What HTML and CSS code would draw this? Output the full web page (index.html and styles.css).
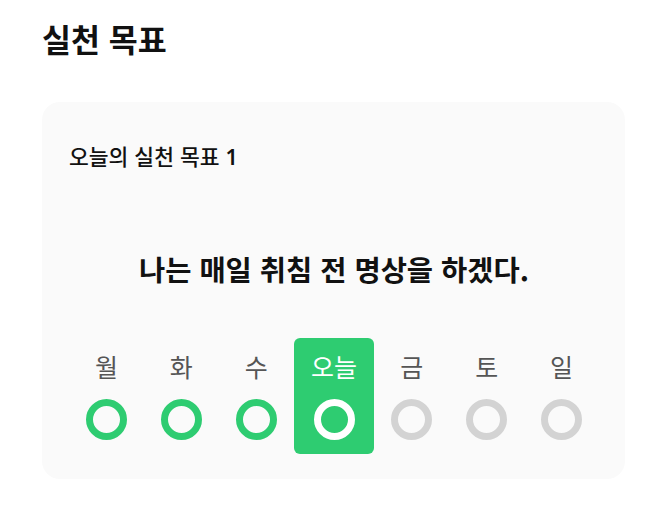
FILE: index.html
```html
<!DOCTYPE html>
<html lang="ko">
<head>
    <meta charset="UTF-8">
    <meta name="viewport" content="width=device-width, initial-scale=1.0">
    <title>실천 목표</title>
    <link rel="stylesheet" href="styles.css">
</head>
<body>
    <div class="page">
        <h1>실천 목표</h1>
        <div class="card">
            <h2>오늘의 실천 목표 <span class="num">1</span></h2>
            <p class="goal">나는 매일 취침 전 명상을 하겠다.</p>
            <div class="week">
                <div class="day done">
                    <span class="label">월</span>
                    <span class="ring"></span>
                </div>
                <div class="day done">
                    <span class="label">화</span>
                    <span class="ring"></span>
                </div>
                <div class="day done">
                    <span class="label">수</span>
                    <span class="ring"></span>
                </div>
                <div class="day today">
                    <span class="label">오늘</span>
                    <span class="ring"></span>
                </div>
                <div class="day">
                    <span class="label">금</span>
                    <span class="ring"></span>
                </div>
                <div class="day">
                    <span class="label">토</span>
                    <span class="ring"></span>
                </div>
                <div class="day">
                    <span class="label">일</span>
                    <span class="ring"></span>
                </div>
            </div>
        </div>
    </div>
</body>
</html>
```

FILE: styles.css
```css
body {
    font-family: "Noto Sans CJK KR", "Noto Sans", sans-serif;
    background-color: #ffffff;
    color: #111111;
    margin: 0;
}
.page {
    padding: 16px 41px 0 42px;
}
h1 {
    font-size: 31.5px;
    font-weight: 700;
    line-height: 44px;
    margin: 0 0 42px;
}
.card {
    background: #fafafa;
    border-radius: 18px;
    padding: 40px 26px 26px 27px;
    height: 377px;
    box-sizing: border-box;
}
h2 {
    font-size: 21.5px;
    font-weight: 500;
    line-height: 28px;
    margin: 0;
}
h2 .num {
    font-family: "Noto Sans", sans-serif;
    font-weight: 600;
}
.goal {
    text-align: center;
    font-size: 28.5px;
    font-weight: 700;
    line-height: 40px;
    margin: 78px 0 0;
}
.week {
    display: flex;
    justify-content: center;
    margin-top: 49px;
}
.day {
    width: 75px;
    display: flex;
    flex-direction: column;
    align-items: center;
    padding: 12px 0 14px;
}
.day.today {
    width: 81px;
    background-color: #2ecc71;
    border-radius: 6px;
}
.label {
    font-size: 25px;
    line-height: 32px;
    color: #555555;
}
.today .label {
    color: #ffffff;
}
.ring {
    width: 27px;
    height: 27px;
    border: 7px solid #d3d3d3;
    border-radius: 50%;
    margin-top: 17px;
}
.done .ring {
    border-color: #2ecc71;
}
.today .ring {
    border-color: #ffffff;
}
```
